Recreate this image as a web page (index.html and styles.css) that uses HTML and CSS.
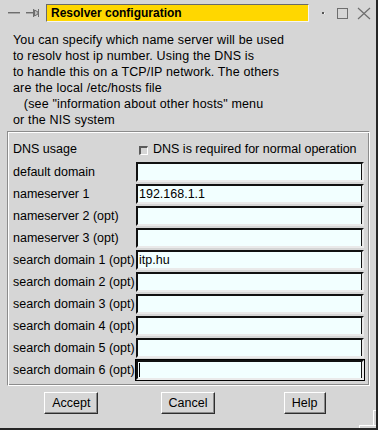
FILE: index.html
```html
<html lang="en">
<head>
    <meta charset="UTF-8">
    <title>Resolver configuration</title>
    <link rel="stylesheet" href="styles.css">
</head>
<body>

    <div class="window">
        <div class="titlebar">
            <svg class="tb-left" width="46" height="28" viewBox="0 0 46 28">
                <!-- iconify -->
                <line x1="8" y1="12.5" x2="20" y2="12.5" stroke="#6e6e6e" stroke-width="1"/>
                <line x1="8" y1="13.5" x2="20" y2="13.5" stroke="#a8a8a8" stroke-width="1"/>
                <!-- pin -->
                <line x1="26" y1="12.5" x2="33" y2="12.5" stroke="#6e6e6e" stroke-width="1"/>
                <line x1="26" y1="13.5" x2="33" y2="13.5" stroke="#a8a8a8" stroke-width="1"/>
                <path d="M33.5 9 V17 M34.5 10 L38 12 L38 14 L34.5 16 Z M38.5 9 V17" stroke="#6e6e6e" stroke-width="1" fill="#bdbdbd"/>
            </svg>
            <div class="title">Resolver configuration</div>
            <svg class="tb-right" width="67" height="28" viewBox="309 0 67 28">
                <rect x="322" y="12" width="2" height="2" fill="#555"/>
                <rect x="324" y="13" width="1" height="1" fill="#fff"/>
                <rect x="337.5" y="8.5" width="10" height="10" stroke="#6e6e6e" fill="none"/>
                <path d="M358 8 L370 19 M370 8 L358 19" stroke="#6e6e6e" stroke-width="1.2"/>
            </svg>
        </div>

        <div class="content">
            <p class="intro">You can specify which name server will be used
to resolv host ip number. Using the DNS is
to handle this on a TCP/IP network. The others
are the local /etc/hosts file
   (see "information about other hosts" menu
or the NIS system</p>

            <div class="panel">
                <div class="row row-check">
                    <span class="label">DNS usage</span>
                    <span class="check"><span class="check-box"></span>DNS is required for normal operation</span>
                </div>
                <div class="row">
                    <span class="label">default domain</span>
                    <div class="field"></div>
                </div>
                <div class="row">
                    <span class="label">nameserver 1</span>
                    <div class="field">192.168.1.1</div>
                </div>
                <div class="row">
                    <span class="label">nameserver 2 (opt)</span>
                    <div class="field"></div>
                </div>
                <div class="row">
                    <span class="label">nameserver 3 (opt)</span>
                    <div class="field"></div>
                </div>
                <div class="row">
                    <span class="label">search domain 1 (opt)</span>
                    <div class="field">itp.hu</div>
                </div>
                <div class="row">
                    <span class="label">search domain 2 (opt)</span>
                    <div class="field"></div>
                </div>
                <div class="row">
                    <span class="label">search domain 3 (opt)</span>
                    <div class="field"></div>
                </div>
                <div class="row">
                    <span class="label">search domain 4 (opt)</span>
                    <div class="field"></div>
                </div>
                <div class="row">
                    <span class="label">search domain 5 (opt)</span>
                    <div class="field"></div>
                </div>
                <div class="row">
                    <span class="label">search domain 6 (opt)</span>
                    <div class="field focus"><span class="caret"></span></div>
                </div>
            </div>

            <div class="buttons">
                <div class="slot"><button class="btn">Accept</button></div>
                <div class="slot"><button class="btn">Cancel</button></div>
                <div class="slot"><button class="btn">Help</button></div>
            </div>
        </div>

        <!-- resize corner -->
        <div class="corner-v"></div>
        <div class="corner-h"></div>
    </div>

</body>
</html>
```

FILE: styles.css
```css
body {
    margin: 0;
    background-color: #d6d6d6;
    font-family: "Liberation Sans", Arial, sans-serif;
    color: #000;
}
.window {
    position: relative;
    width: 376px;
    height: 428px;
    background: #d6d6d6;
    border-right: 2px solid #262626;
    border-bottom: 2px solid #262626;
    font-size: 12.5px;
    overflow: hidden;
}
.titlebar {
    display: flex;
    align-items: flex-start;
    height: 28px;
}
.tb-left,
.tb-right {
    display: block;
    flex: none;
}
.title {
    box-sizing: border-box;
    width: 263px;
    height: 18px;
    margin-top: 4px;
    padding-left: 4px;
    background: #ffd700;
    border: 1px solid;
    border-color: #6a6a6a #f4f4f4 #f4f4f4 #6a6a6a;
    font-size: 12px;
    font-weight: bold;
    line-height: 16px;
}
.content {
    padding: 4px 6px 0 7px;
}
.intro {
    margin: 0 0 3px 6px;
    line-height: 16px;
    letter-spacing: 0.15px;
    white-space: pre;
}
.panel {
    padding: 5px 4px 4px 5px;
    border: 1px solid;
    border-color: #8c8c8c #fff #fff #8c8c8c;
    box-shadow: inset 1px 1px 0 #fff, inset -1px -1px 0 #8c8c8c;
}
.row {
    display: grid;
    grid-template-columns: 122px 1fr;
    align-items: center;
    height: 22px;
}
.row-check {
    height: 24px;
}
.label {
    white-space: nowrap;
}
.check {
    display: flex;
    align-items: center;
    padding-left: 4px;
    white-space: nowrap;
}
.check-box {
    box-sizing: border-box;
    width: 9px;
    height: 9px;
    margin-right: 5px;
    margin-top: 2px;
    border: 2px solid;
    border-color: #5a5a5a #fff #fff #5a5a5a;
    border-width: 2px 1px 1px 2px;
}
.field {
    box-sizing: border-box;
    height: 20px;
    margin: 1px;
    padding-left: 1px;
    background: #f2ffff;
    border: 2px solid;
    border-color: #111 #eaeaea #eaeaea #111;
    box-shadow: -1px 0 0 #111 inset;
    line-height: 16px;
}
.field.focus {
    outline: 1px solid #000;
}
.caret {
    display: inline-block;
    width: 1px;
    height: 14px;
    margin-top: 1px;
    background: #000;
    vertical-align: top;
}
.buttons {
    display: flex;
    width: 350px;
    margin: 6px 0 0 6px;
}
.slot {
    flex: 1;
    display: flex;
    justify-content: center;
}
.btn {
    box-sizing: border-box;
    height: 22px;
    padding: 0 7px;
    background: #d6d6d6;
    border: 1px solid;
    border-color: #fff #2e2e2e #2e2e2e #fff;
    box-shadow: inset -1px -1px 0 #8a8a8a;
    font-family: "Liberation Sans", Arial, sans-serif;
    font-size: 12.5px;
    color: #000;
}
.corner-v {
    position: absolute;
    left: 373px;
    top: 410px;
    width: 5px;
    height: 20px;
    background: #d6d6d6;
    border-top: 1px solid #fff;
    border-left: 1px solid #fff;
}
.corner-h {
    position: absolute;
    left: 359px;
    top: 425px;
    width: 19px;
    height: 5px;
    background: #d6d6d6;
    border-top: 1px solid #fff;
    border-left: 1px solid #fff;
}
```
